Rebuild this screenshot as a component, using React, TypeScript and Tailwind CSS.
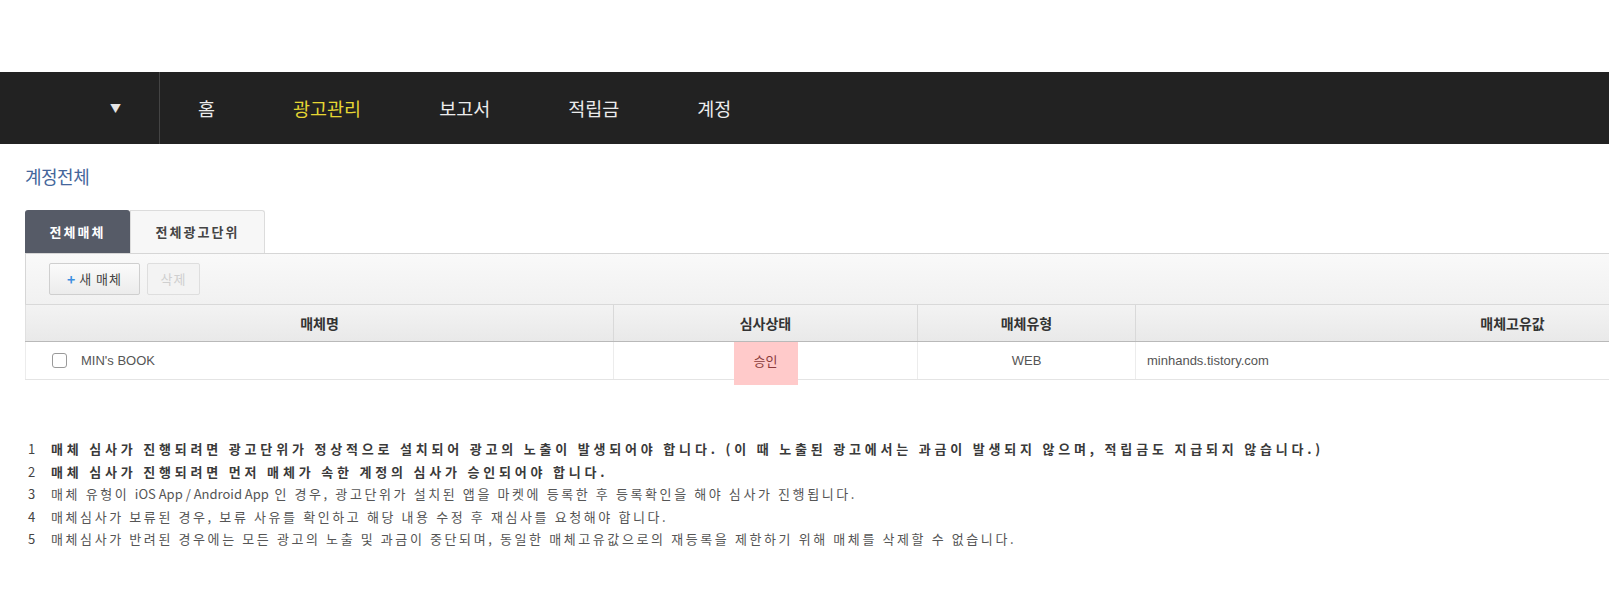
import type { ReactNode } from 'react';

const navItems = ['홈', '광고관리', '보고서', '적립금', '계정'];

const notes: { text: ReactNode; strong: boolean }[] = [
  { text: '매체 심사가 진행되려면 광고단위가 정상적으로 설치되어 광고의 노출이 발생되어야 합니다. (이 때 노출된 광고에서는 과금이 발생되지 않으며, 적립금도 지급되지 않습니다.)', strong: true },
  { text: '매체 심사가 진행되려면 먼저 매체가 속한 계정의 심사가 승인되어야 합니다.', strong: true },
  {
    text: (
      <>
        매체 유형이 <span className="tracking-normal">iOS App / Android App</span> 인 경우, 광고단위가 설치된 앱을 마켓에 등록한 후 등록확인을 해야 심사가 진행됩니다.
      </>
    ),
    strong: false,
  },
  { text: '매체심사가 보류된 경우, 보류 사유를 확인하고 해당 내용 수정 후 재심사를 요청해야 합니다.', strong: false },
  { text: '매체심사가 반려된 경우에는 모든 광고의 노출 및 과금이 중단되며, 동일한 매체고유값으로의 재등록을 제한하기 위해 매체를 삭제할 수 없습니다.', strong: false },
];

export default function App() {
  return (
    <div className="w-[1609px] h-[601px] overflow-hidden bg-white font-['Noto_Sans_CJK_KR',sans-serif]">
      <div className="h-[72px]" />

      {/* Top nav */}
      <nav className="h-[72px] bg-[#222222] flex items-center">
        <div className="w-[160px] h-full border-r border-[#444] flex items-center justify-end pr-[38px]">
          <span className="text-[#e5e5e5] text-[11px]">▼</span>
        </div>
        <ul className="flex items-center gap-[78px] pl-[38px]">
          {navItems.map((item) => (
            <li
              key={item}
              className={`text-[18.5px] leading-none ${item === '광고관리' ? 'text-[#e6d733]' : 'text-[#ececec]'}`}
            >
              {item}
            </li>
          ))}
        </ul>
      </nav>

      <div className="pl-[25px]">
        <h1 className="mt-[22px] text-[18px] leading-[20px] text-[#44669b] tracking-[-0.5px]">계정전체</h1>

        {/* Tabs */}
        <div className="mt-[24px] flex h-[43px]">
          <div className="w-[105px] bg-[#565b67] rounded-t-[3px] flex items-center justify-center text-white text-[13px] font-bold tracking-[2px]">
            전체매체
          </div>
          <div className="w-[135px] bg-[#f7f7f7] border border-b-0 border-[#dcdcdc] rounded-tr-[3px] flex items-center justify-center text-[#444] text-[13px] font-bold tracking-[2px]">
            전체광고단위
          </div>
        </div>

        <div className="w-[1864px]">
          {/* Toolbar */}
          <div className="h-[51px] border-t border-l border-[#d6d6d6] bg-gradient-to-b from-[#f9f9f9] to-[#f1f1f1] flex items-center pl-[23px] gap-[7px]">
            <button className="h-[32px] w-[91px] border border-[#cfcfcf] rounded-[2px] bg-gradient-to-b from-[#fbfbfb] to-[#ececec] text-[13px] text-[#444] tracking-[1px] flex items-center justify-center gap-[3px]">
              <span className="text-[#3d8ee0] text-[14px] font-bold">+</span>
              <span>새 매체</span>
            </button>
            <button className="h-[32px] w-[53px] border border-[#dedede] rounded-[2px] bg-[#f3f3f3] text-[13px] text-[#cfcfcf] tracking-[1px]">
              삭제
            </button>
          </div>

          {/* Header */}
          <div className="flex h-[38px] border-t border-b border-t-[#d9d9d9] border-b-[#b9b9b9] bg-gradient-to-b from-[#f3f3f3] to-[#e9e9e9] text-[14px] font-bold text-[#333]">
            <div className="w-[588px] flex items-center justify-center border-l border-[#e0e0e0]">매체명</div>
            <div className="w-[304px] flex items-center justify-center border-l border-[#d9d9d9]">심사상태</div>
            <div className="w-[218px] flex items-center justify-center border-l border-[#d9d9d9]">매체유형</div>
            <div className="flex-1 flex items-center justify-center border-l border-[#d9d9d9]">매체고유값</div>
          </div>

          {/* Row */}
          <div className="flex h-[38px] border-b border-[#e4e4e4] text-[13px] text-[#555] font-['Liberation_Sans',sans-serif]">
            <div className="w-[588px] flex items-center pl-[26px] gap-[14px] border-l border-[#ececec]">
              <span className="w-[15px] h-[15px] border border-[#9a9a9a] rounded-[3px] bg-white" />
              <span>MIN's BOOK</span>
            </div>
            <div className="relative w-[304px] flex items-center justify-center border-l border-[#ececec]">
              <div className="absolute left-[120px] top-0 w-[64px] h-[43px] bg-[#ffcaca]" />
              <span className="relative font-['Noto_Sans_CJK_KR',sans-serif] text-[#8a3a3a]">승인</span>
            </div>
            <div className="w-[218px] flex items-center justify-center border-l border-[#ececec]">WEB</div>
            <div className="flex-1 flex items-center pl-[11px] border-l border-[#ececec]">minhands.tistory.com</div>
          </div>
        </div>
      </div>

      {/* Notes */}
      <ol className="mt-[58px] pl-[28px] text-[13px] leading-[22.6px]">
        {notes.map((note, i) => (
          <li key={i} className="flex">
            <span className="w-[23px] text-[#444]">{i + 1}</span>
            <span className={note.strong ? 'font-bold text-[#3a3a3a] tracking-[3.8px]' : 'text-[#555] tracking-[2.6px]'}>
              {note.text}
            </span>
          </li>
        ))}
      </ol>
    </div>
  );
}
